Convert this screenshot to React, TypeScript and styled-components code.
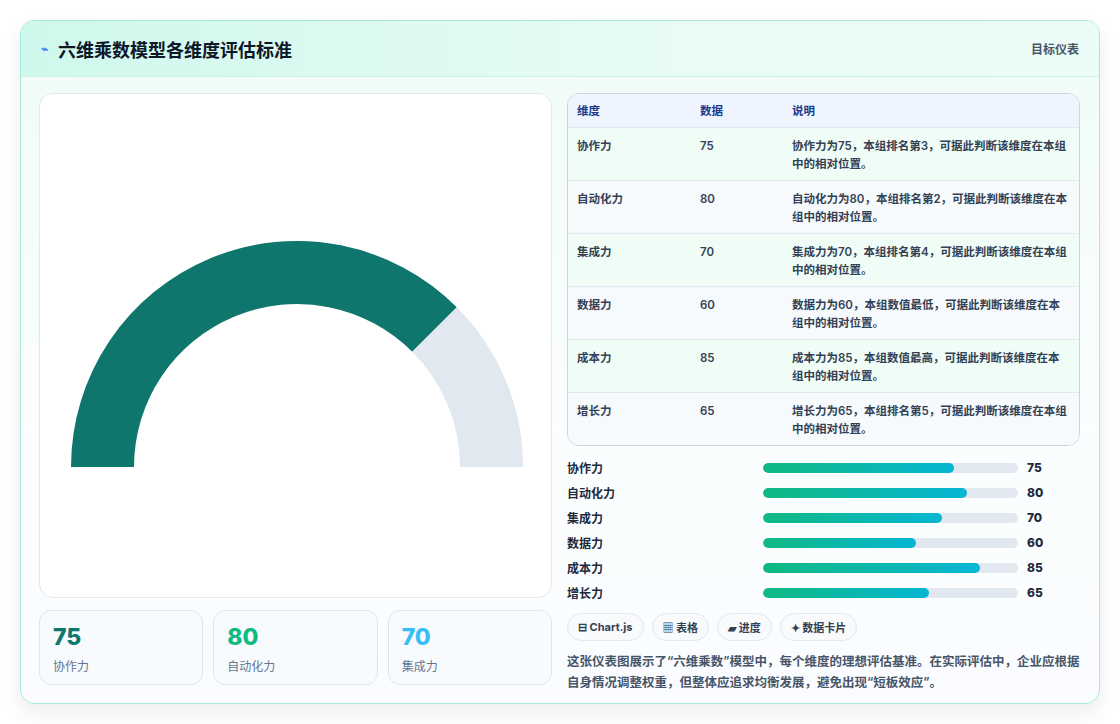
import React from "react";
import styled, { createGlobalStyle } from "styled-components";

const G = createGlobalStyle`
  html,body{margin:0;padding:0;background:#fff;}
  body{font-family:"Inter","Noto Sans CJK SC",sans-serif;}
`;
const Page = styled.div`padding:20px 20px 20px 20px;width:1120px;box-sizing:border-box;`;
const Card = styled.div`
  width:1080px;height:684px;box-sizing:border-box;border:1px solid #a7eadb;border-radius:14px;overflow:hidden;
  background:linear-gradient(180deg,#effcf7 0%,#fbfefe 60%,#fafcff 100%);
  box-shadow:0 8px 20px rgba(15,23,42,0.08);display:flex;flex-direction:column;
`;
const Header = styled.div`
  height:55px;border-bottom:1px solid #d2f1ea;display:flex;align-items:center;justify-content:space-between;
  padding:0 20px;background:linear-gradient(90deg,#cff8ec,#e8fbf6 60%,#ecfcf8);
`;
const Title = styled.h1`margin:0;font-size:18px;font-weight:700;color:#0f172a;display:flex;align-items:center;gap:10px;`;
const Tag = styled.span`font-size:12px;color:#475569;font-weight:600;`;
const Body = styled.div`display:grid;grid-template-columns:513px 513px;gap:15px;padding:16px 18px 0 18px;`;
const Left = styled.div`display:flex;flex-direction:column;gap:12px;`;
const ChartBox = styled.div`height:505px;box-sizing:border-box;background:#fff;border:1px solid #e2e8f0;border-radius:14px;display:flex;align-items:flex-start;justify-content:center;`;
const Stats = styled.div`display:grid;grid-template-columns:repeat(3,1fr);gap:10px;`;
const Stat = styled.div`height:75px;box-sizing:border-box;border:1px solid #dbe7f3;border-radius:12px;background:#f8fbfe;padding:12px 13px;`;
const StatNum = styled.div<{c:string}>`font-size:23px;font-weight:800;color:${p=>p.c};line-height:28px;`;
const StatLbl = styled.div`font-size:12px;color:#64748b;margin-top:6px;`;
const Right = styled.div`display:flex;flex-direction:column;`;
const Table = styled.div`border:1px solid #cbd5e1;border-radius:12px;overflow:hidden;background:#fff;`;
const Row = styled.div<{h?:boolean;alt?:boolean}>`
  display:grid;grid-template-columns:123px 92px 1fr;padding:0 9px;box-sizing:border-box;
  height:${p=>p.h?33:53}px;align-items:${p=>p.h?"center":"start"};
  padding-top:${p=>p.h?0:9}px;
  background:${p=>p.h?"#eef5fe":p.alt?"#f7fafc":"#f0fdf6"};
  border-top:${p=>p.h?"none":"1px solid #e2e8f0"};
  font-size:11.5px;font-weight:600;color:${p=>p.h?"#1e3a8a":"#334155"};line-height:18px;
`;
const Bars = styled.div`display:flex;flex-direction:column;gap:6px;margin-top:12px;`;
const BarRow = styled.div`display:grid;grid-template-columns:187px 255px 1fr;align-items:center;height:19px;column-gap:9px;font-size:12px;font-weight:600;color:#1e293b;`;
const Track = styled.div`height:10px;border-radius:5px;background:#e2e8f0;overflow:hidden;`;
const Fill = styled.div`height:100%;border-radius:5px;background:linear-gradient(90deg,#10b981,#06b6d4);`;
const Val = styled.span`font-weight:800;font-size:12px;color:#1e293b;`;
const Chips = styled.div`display:flex;gap:8px;margin-top:11px;`;
const Chip = styled.span`height:28px;box-sizing:border-box;padding:0 10px;border:1px solid #e2e8f0;border-radius:14px;background:#f8fafc;font-size:11px;font-weight:700;color:#334155;display:flex;align-items:center;gap:4px;`;
const Para = styled.p`margin:10px 0 0;font-size:12.5px;line-height:21px;color:#475569;font-weight:600;`;

const rows=[["协作力",75,"协作力为75，本组排名第3，可据此判断该维度在本组中的相对位置。"],["自动化力",80,"自动化力为80，本组排名第2，可据此判断该维度在本组中的相对位置。"],["集成力",70,"集成力为70，本组排名第4，可据此判断该维度在本组中的相对位置。"],["数据力",60,"数据力为60，本组数值最低，可据此判断该维度在本组中的相对位置。"],["成本力",85,"成本力为85，本组数值最高，可据此判断该维度在本组中的相对位置。"],["增长力",65,"增长力为65，本组排名第5，可据此判断该维度在本组中的相对位置。"]] as const;

function arc(cx:number,cy:number,R:number,r:number,a0:number,a1:number){
  const p=(rad:number,a:number)=>[cx+rad*Math.cos(a),cy-rad*Math.sin(a)];
  const [x0,y0]=p(R,a0),[x1,y1]=p(R,a1),[x2,y2]=p(r,a1),[x3,y3]=p(r,a0);
  return `M${x0} ${y0} A${R} ${R} 0 0 1 ${x1} ${y1} L${x2} ${y2} A${r} ${r} 0 0 0 ${x3} ${y3}Z`;
}

export default function App(){
  const cx=257,cy=373;
  const split=Math.PI*(1-0.75);
  return <Page><G/><Card>
    <Header><Title><span style={{color:"#3b82f6",fontSize:12}}>⌁</span>六维乘数模型各维度评估标准</Title><Tag>目标仪表</Tag></Header>
    <Body>
      <Left>
        <ChartBox><svg width="511" height="400" viewBox="0 0 511 400">
          <path d={arc(cx,cy,226,163,Math.PI,split)} fill="#0f766e"/>
          <path d={arc(cx,cy,226,163,split,0)} fill="#e2e8f0"/>
        </svg></ChartBox>
        <Stats>
          <Stat><StatNum c="#0f766e">75</StatNum><StatLbl>协作力</StatLbl></Stat>
          <Stat><StatNum c="#10b981">80</StatNum><StatLbl>自动化力</StatLbl></Stat>
          <Stat><StatNum c="#38bdf8">70</StatNum><StatLbl>集成力</StatLbl></Stat>
        </Stats>
      </Left>
      <Right>
        <Table>
          <Row h><span>维度</span><span>数据</span><span>说明</span></Row>
          {rows.map((r,i)=><Row key={i} alt={i%2===1}><span>{r[0]}</span><span>{r[1]}</span><span>{r[2]}</span></Row>)}
        </Table>
        <Bars>{rows.map((r,i)=><BarRow key={i}><span>{r[0]}</span><Track><Fill style={{width:`${r[1]}%`}}/></Track><Val>{r[1]}</Val></BarRow>)}</Bars>
        <Chips><Chip>⊟ Chart.js</Chip><Chip>▦ 表格</Chip><Chip>▰ 进度</Chip><Chip>✦ 数据卡片</Chip></Chips>
        <Para>这张仪表图展示了“六维乘数”模型中，每个维度的理想评估基准。在实际评估中，企业应根据自身情况调整权重，但整体应追求均衡发展，避免出现“短板效应”。</Para>
      </Right>
    </Body>
  </Card></Page>;
}
